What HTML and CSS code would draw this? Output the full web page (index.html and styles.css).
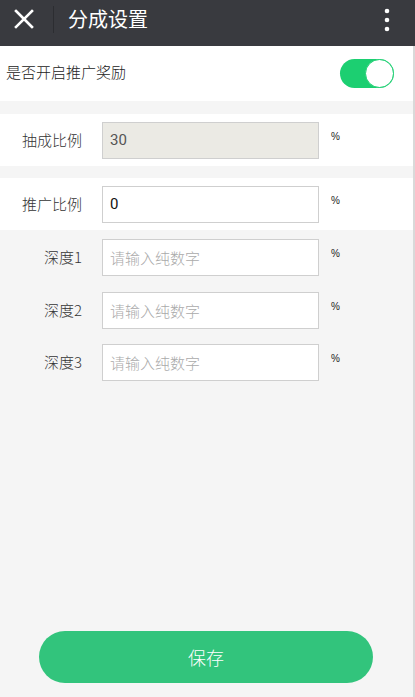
FILE: index.html
```html
<!DOCTYPE html>
<html lang="zh">
<head>
<meta charset="utf-8">
<title>分成设置</title>
<link rel="stylesheet" href="styles.css">
</head>
<body>
<header class="topbar">
  <div class="topbar-inner">
    <span class="close">
      <svg width="20" height="20" viewBox="0 0 20 20"><path d="M2 2 L18 18 M18 2 L2 18" stroke="#fff" stroke-width="2.6" stroke-linecap="square" fill="none"/></svg>
    </span>
    <span class="divider"></span>
    <h1 class="title">分成设置</h1>
    <span class="more">
      <svg width="6" height="24" viewBox="0 0 6 24"><circle cx="3" cy="3" r="2.3" fill="#fff"/><circle cx="3" cy="12" r="2.3" fill="#fff"/><circle cx="3" cy="21" r="2.3" fill="#fff"/></svg>
    </span>
  </div>
</header>
<main class="content">
  <section class="panel switch-row">
    <span class="switch-label">是否开启推广奖励</span>
    <span class="toggle"><span class="knob"></span></span>
  </section>
  <section class="panel form-row gap-after">
    <label class="label">抽成比例</label>
    <div class="field disabled">30</div>
    <span class="unit">%</span>
  </section>
  <section class="panel form-row">
    <label class="label">推广比例</label>
    <div class="field">0</div>
    <span class="unit">%</span>
  </section>
  <div class="depths">
    <div class="form-row depth">
      <label class="label">深度1</label>
      <div class="field placeholder">请输入纯数字</div>
      <span class="unit">%</span>
    </div>
    <div class="form-row depth">
      <label class="label">深度2</label>
      <div class="field placeholder">请输入纯数字</div>
      <span class="unit">%</span>
    </div>
    <div class="form-row depth">
      <label class="label">深度3</label>
      <div class="field placeholder">请输入纯数字</div>
      <span class="unit">%</span>
    </div>
  </div>
  <div class="spacer"></div>
  <div class="actions">
    <button class="save">保存</button>
  </div>
</main>
</body>
</html>
```
FILE: styles.css
```css
* { box-sizing: border-box; }
html, body {
  margin: 0;
  padding: 0;
  height: 697px;
  overflow: hidden;
}
body {
  font-family: "Noto Sans CJK SC", "Noto Sans", sans-serif;
  background: #f5f5f5;
  color: #222;
  display: flex;
  flex-direction: column;
}
.topbar {
  height: 46px;
  background: #393a3f;
  flex: none;
}
.topbar-inner {
  height: 38px;
  display: flex;
  align-items: center;
  padding: 0 0 0 14px;
}
.close { width: 20px; height: 20px; display: flex; }
.divider {
  width: 1px;
  height: 27px;
  background: #2c2d31;
  margin-left: 19px;
  align-self: flex-end;
  margin-bottom: 5px;
}
.title {
  margin: 0 0 0 14px;
  font-size: 20px;
  font-weight: normal;
  color: #fff;
  flex: 1;
  line-height: 1;
}
.more { display: flex; margin-right: 25px; margin-top: 1px; }
.content {
  flex: 1;
  display: flex;
  flex-direction: column;
  border-right: 2px solid #d9d9d9;
}
.panel { background: #fff; }
.switch-row {
  height: 55px;
  display: flex;
  align-items: center;
  justify-content: space-between;
  padding: 0 19px 0 6px;
  margin-bottom: 13px;
}
.switch-label { font-size: 15px; color: #222; margin-top: -4px; font-weight: 300; }
.toggle {
  width: 54px;
  height: 29px;
  border-radius: 15px;
  background: #1ccf71;
  position: relative;
  display: block;
}
.knob {
  position: absolute;
  right: 0;
  top: 0;
  width: 29px;
  height: 29px;
  border-radius: 50%;
  background: #fff;
  border: 1.5px solid #1ccf71;
}
.form-row {
  display: flex;
  align-items: flex-start;
  height: 52px;
  padding-top: 8px;
}
.gap-after { margin-bottom: 12px; }
.depths { padding-top: 1px; }
.form-row.depth { height: 52.5px; }
.label {
  width: 82px;
  text-align: right;
  font-size: 15px;
  line-height: 36px;
  color: #333;
  font-weight: 300;
}
.field {
  margin-left: 20px;
  width: 217px;
  height: 37px;
  border: 1px solid #cfcfcf;
  background: #fff;
  font-size: 15px;
  line-height: 35px;
  padding-left: 7px;
  color: #111;
  font-family: "Roboto", "Noto Sans CJK SC", sans-serif;
}
.field.disabled { background: #ebeae4; color: #555; }
.field.placeholder { color: #aaa; font-family: "Noto Sans CJK SC", sans-serif; font-weight: 300; }
.unit {
  margin-left: 12px;
  font-size: 10px;
  line-height: 1;
  margin-top: 10px;
  color: #222;
  font-family: "Liberation Sans", sans-serif;
}
.spacer { flex: 1; }
.actions {
  padding: 0 40px 14px 39px;
}
.save {
  width: 100%;
  height: 52px;
  border: none;
  border-radius: 26px;
  background: #32c47c;
  color: #fff;
  font-size: 18px;
  font-family: "Noto Sans CJK SC", sans-serif;
  font-weight: 300;
  padding: 0;
}
```
